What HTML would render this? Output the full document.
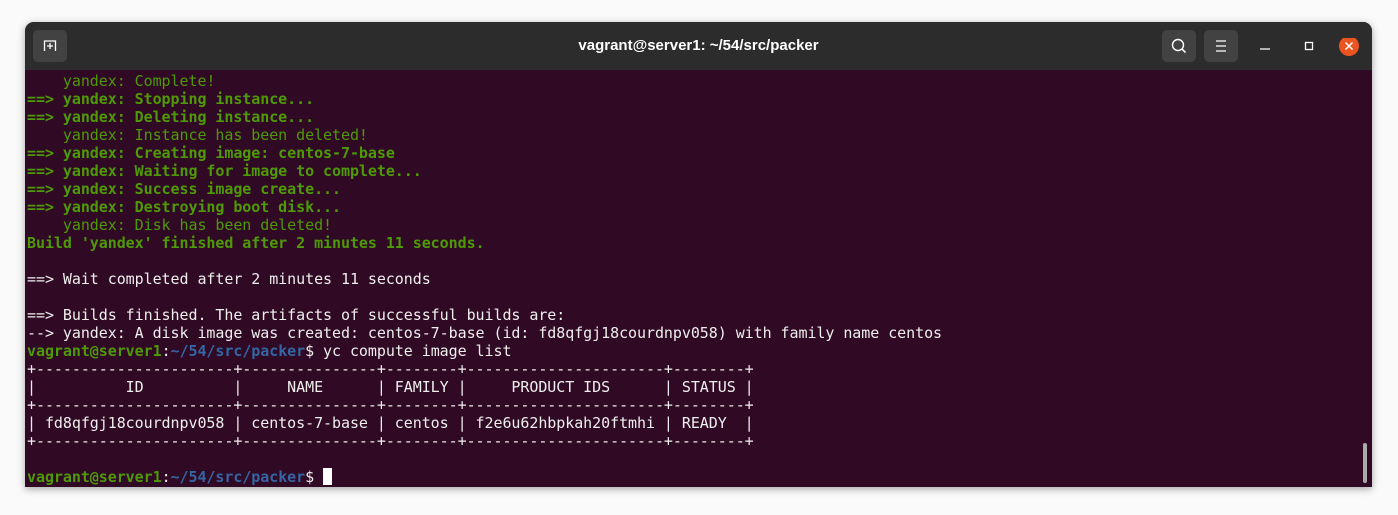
<!DOCTYPE html>
<html><head><meta charset="utf-8"><style>
html,body{margin:0;padding:0;background:#fafafa;width:1398px;height:515px;overflow:hidden}
.win{position:absolute;left:25px;top:22px;width:1347px;height:465px;background:#300a24;border-radius:9px 9px 0 0;overflow:hidden;box-shadow:0 2px 8px rgba(0,0,0,.35)}
.tb{position:absolute;left:0;top:0;right:0;height:48px;background:#2c2c2c;color:#fff;font:bold 15px "Liberation Sans",sans-serif}
.title{position:absolute;left:0;right:0;top:15px;text-align:center}
.btn{position:absolute;top:8px;width:34px;height:32px;background:#424242;border-radius:5px}
.term{position:absolute;left:2px;top:50px;font:15px "DejaVu Sans Mono",monospace;letter-spacing:-0.06px;line-height:18px;color:#eeeeec;white-space:pre}
.g{color:#4e9a06}.b{font-weight:bold}.bl{color:#3465a4;font-weight:bold}
.cur{display:inline-block;width:9px;height:17px;background:#fff;vertical-align:-3px}
</style></head><body>
<div class="win">
<div class="tb">
<div class="btn" style="left:8px"><svg width="34" height="32"><path d="M11.5 21V11h11v10" stroke="#fff" fill="none" stroke-width="1.3"/><path d="M17 13v6M14 16h6" stroke="#fff" stroke-width="1.3"/></svg></div>
<div class="title">vagrant@server1: ~/54/src/packer</div>
<div class="btn" style="left:1137px"><svg width="34" height="32"><circle cx="16" cy="15" r="5.5" stroke="#fff" stroke-width="1.4" fill="none"/><path d="M20 19l3.5 3.5" stroke="#fff" stroke-width="1.6"/></svg></div>
<div class="btn" style="left:1179px"><svg width="34" height="32"><path d="M12 11h10M12 16h10M12 21h10" stroke="#fff" stroke-width="1.3"/></svg></div>
<svg style="position:absolute;left:1230px;top:16px" width="120" height="20"><path d="M5 11h10" stroke="#fff" stroke-width="1.3"/><rect x="50.5" y="4.5" width="7" height="7" stroke="#fff" fill="none" stroke-width="1.3"/><circle cx="94" cy="8" r="10" fill="#e95420"/><path d="M90.5 4.5l7 7M97.5 4.5l-7 7" stroke="#fff" stroke-width="1.5"/></svg>
</div>
<div class="term"><span class="g">    yandex: Complete!
<span class="b">==&gt; yandex: Stopping instance...
==&gt; yandex: Deleting instance...</span>
    yandex: Instance has been deleted!
<span class="b">==&gt; yandex: Creating image: centos-7-base
==&gt; yandex: Waiting for image to complete...
==&gt; yandex: Success image create...
==&gt; yandex: Destroying boot disk...</span>
    yandex: Disk has been deleted!
<span class="b">Build 'yandex' finished after 2 minutes 11 seconds.</span></span>

==&gt; Wait completed after 2 minutes 11 seconds

==&gt; Builds finished. The artifacts of successful builds are:
--&gt; yandex: A disk image was created: centos-7-base (id: fd8qfgj18courdnpv058) with family name centos
<span class="g b">vagrant@server1</span>:<span class="bl">~/54/src/packer</span>$ yc compute image list
+----------------------+---------------+--------+----------------------+--------+
|          ID          |     NAME      | FAMILY |     PRODUCT IDS      | STATUS |
+----------------------+---------------+--------+----------------------+--------+
| fd8qfgj18courdnpv058 | centos-7-base | centos | f2e6u62hbpkah20ftmhi | READY  |
+----------------------+---------------+--------+----------------------+--------+

<span class="g b">vagrant@server1</span>:<span class="bl">~/54/src/packer</span>$ <span class="cur"></span></div>
<div style="position:absolute;left:1338px;top:421px;width:4px;height:40px;background:#aaa;border-radius:2px"></div>
</div>
</body></html>
